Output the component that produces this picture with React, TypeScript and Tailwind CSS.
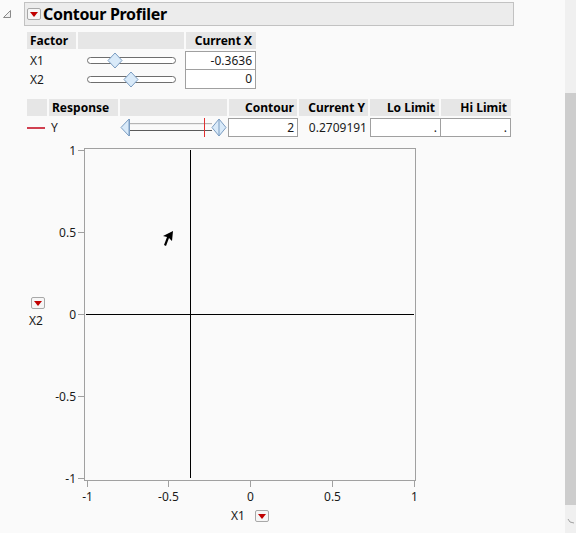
import React from 'react';

// Small red drop-down menu button used by JMP reports
function MenuButton({ className = '' }: { className?: string }) {
  return (
    <span
      className={`inline-flex items-center justify-center w-[14px] h-[12px] border border-[#a8a8a8] rounded-[2px] bg-[#f6f6f6] ${className}`}
    >
      <svg width="8" height="5" viewBox="0 0 8 5">
        <polygon points="0,0 8,0 4,5" fill="#c00000" />
      </svg>
    </span>
  );
}

function Slider({ pos }: { pos: number }) {
  // track 88px wide, thumb center at pos
  return (
    <svg width="92" height="20" viewBox="0 0 92 20" className="block">
      <rect x="1.5" y="6.5" width="88" height="6" rx="3" fill="#ffffff" stroke="#6e6e6e" />
      <polygon
        points={`${pos},2 ${pos + 7},9.5 ${pos},17 ${pos - 7},9.5`}
        fill="#d9eaf9"
        stroke="#7b9dc2"
      />
    </svg>
  );
}

function RangeSlider() {
  return (
    <svg width="107" height="19" viewBox="0 0 107 19" className="block">
      <line x1="10" y1="5.5" x2="92" y2="5.5" stroke="#8a8a8a" />
      <line x1="10" y1="12.5" x2="92" y2="12.5" stroke="#5a5a5a" />
      <line x1="10" y1="6" x2="92" y2="6" stroke="#e0e0e0" />
      <polygon points="9,1 9,18 1,9.5" fill="#d9eaf9" stroke="#7b9dc2" />
      <line x1="9.5" y1="1" x2="9.5" y2="18" stroke="#7b9dc2" />
      <line x1="84.5" y1="0" x2="84.5" y2="19" stroke="#e03030" />
      <polygon points="99,1 106,9.5 99,18 92,9.5" fill="#d9eaf9" stroke="#7b9dc2" />
      <line x1="99" y1="1" x2="99" y2="18" stroke="#7b9dc2" />
    </svg>
  );
}

function ContourPlot() {
  const frame = '#a0a0a0';
  const xTicks = [
    { x: 39, label: '-1' },
    { x: 120, label: '-0.5' },
    { x: 202, label: '0' },
    { x: 284, label: '0.5' },
    { x: 366, label: '1' },
  ];
  const yTicks = [
    { y: 10, label: '1' },
    { y: 92, label: '0.5' },
    { y: 174, label: '0' },
    { y: 256, label: '-0.5' },
    { y: 338, label: '-1' },
  ];
  return (
    <svg width="382" height="366" viewBox="0 0 382 366" className="block">
      <rect x="36.5" y="8.5" width="331" height="332" fill="#fafafa" stroke={frame} />
      {yTicks.map((t) => (
        <g key={t.label}>
          <line x1="30" y1={t.y + 0.5} x2="36" y2={t.y + 0.5} stroke={frame} />
          <text x="28" y={t.y + 4.5} textAnchor="end" fontSize="12" fill="#1a1a1a">
            {t.label}
          </text>
        </g>
      ))}
      {xTicks.map((t) => (
        <g key={t.label}>
          <line x1={t.x + 0.5} y1="341" x2={t.x + 0.5} y2="347" stroke={frame} />
          <text x={t.x + 0.5} y="361" textAnchor="middle" fontSize="12" fill="#1a1a1a">
            {t.label}
          </text>
        </g>
      ))}
      <line x1="142.5" y1="10" x2="142.5" y2="338" stroke="#000000" />
      <line x1="38" y1="174.5" x2="366" y2="174.5" stroke="#000000" />
      {/* mouse pointer left in the capture */}
      <polygon points="125,91 124,101 121,98 118,106 116,105 119,97 115,96" fill="#000000" />
    </svg>
  );
}

export default function App() {
  const hdr = 'h-[17px] bg-[#e6e6e6] text-[12px] font-bold leading-[17px] text-black';
  return (
    <div
      className="w-[576px] h-[533px] flex bg-[#fafafa] text-[12px] text-[#1a1a1a] overflow-hidden"
      style={{ fontFamily: '"Noto Sans", "Open Sans", sans-serif' }}
    >
      <div className="flex-1 flex flex-col">
        {/* Title */}
        <div className="flex items-start pt-[2px]">
          <div className="w-[24px] h-[24px] flex items-center pl-[2px]">
            <svg width="10" height="10" viewBox="0 0 10 10">
              <polygon points="8.5,1.5 8.5,8.5 1.5,8.5" fill="#f0f0f0" stroke="#8a8a8a" />
            </svg>
          </div>
          <div className="w-[490px] h-[24px] bg-[#ececec] border border-[#c2c2c2] flex items-center pl-[2px] gap-[2px]">
            <MenuButton />
            <span className="text-[16px] font-bold text-black leading-none tracking-[-0.3px]">
              Contour Profiler
            </span>
          </div>
        </div>

        {/* Factor table */}
        <div className="ml-[27px] mt-[6px] grid grid-cols-[49px_106px_70px] gap-x-[2px]">
          <div className={`${hdr} pl-[3px]`}>Factor</div>
          <div className={hdr}></div>
          <div className={`${hdr} text-right pr-[4px]`}>Current X</div>
        </div>
        <div className="ml-[27px] mt-[2px] grid grid-cols-[49px_109px_71px]">
          <div className="h-[19px] leading-[19px] pl-[3px]">X1</div>
          <div className="h-[19px] pl-[10px]">
            <Slider pos={29} />
          </div>
          <div className="h-[19px] border border-[#a0a0a0] bg-white text-right pr-[3px] leading-[17px]">
            -0.3636
          </div>
          <div className="h-[19px] leading-[19px] pl-[3px]">X2</div>
          <div className="h-[19px] pl-[10px]">
            <Slider pos={45} />
          </div>
          <div className="h-[19px] border border-t-0 border-[#a0a0a0] bg-white text-right pr-[3px] leading-[18px]">
            0
          </div>
        </div>

        {/* Response table */}
        <div className="ml-[27px] mt-[10px] grid grid-cols-[20px_69px_107px_68px_69px_69px_70px] gap-x-[2px]">
          <div className={hdr}></div>
          <div className={`${hdr} pl-[3px]`}>Response</div>
          <div className={hdr}></div>
          <div className={`${hdr} text-right pr-[3px]`}>Contour</div>
          <div className={`${hdr} text-right pr-[3px]`}>Current Y</div>
          <div className={`${hdr} text-right pr-[4px]`}>Lo Limit</div>
          <div className={`${hdr} text-right pr-[4px]`}>Hi Limit</div>
        </div>
        <div className="ml-[27px] mt-[2px] grid grid-cols-[22px_71px_108px_70px_72px_71px_70px] items-center">
          <div className="h-[19px] flex items-center">
            <div className="w-[18px] h-[2px] bg-[#d04050]" />
          </div>
          <div className="h-[19px] leading-[19px] pl-[2px]">Y</div>
          <div className="h-[19px]">
            <RangeSlider />
          </div>
          <div className="h-[19px] border border-[#a0a0a0] bg-white text-right pr-[3px] leading-[17px]">
            2
          </div>
          <div className="h-[19px] leading-[19px] text-right pr-[3px]">0.2709191</div>
          <div className="h-[19px] border border-[#a0a0a0] bg-white text-right pr-[3px] leading-[17px]">
            .
          </div>
          <div className="h-[19px] border border-l-0 border-[#a0a0a0] bg-white text-right pr-[3px] leading-[17px]">
            .
          </div>
        </div>

        {/* Plot */}
        <div className="flex mt-[3px]">
          <div className="w-[48px] pl-[29px] pt-[157px] flex flex-col items-start">
            <MenuButton className="ml-[2px]" />
            <span className="mt-[6px] leading-[12px]">X2</span>
          </div>
          <ContourPlot />
        </div>
        <div className="flex items-center ml-[231px] mt-[3px] gap-[10px]">
          <span className="leading-[14px]">X1</span>
          <MenuButton />
        </div>
      </div>

      {/* Scrollbar */}
      <div className="w-[11px] flex flex-col bg-[#f0f0f0]">
        <div className="h-[93px]" />
        <div className="h-[412px] bg-[#cdcdcd]" />
        <div className="flex-1 flex items-end justify-center pb-[8px]">
          <svg width="8" height="8" viewBox="0 0 8 8">
            <path d="M1 2 L3 5 L7 6" stroke="#a0a0a0" fill="none" />
          </svg>
        </div>
      </div>
    </div>
  );
}
